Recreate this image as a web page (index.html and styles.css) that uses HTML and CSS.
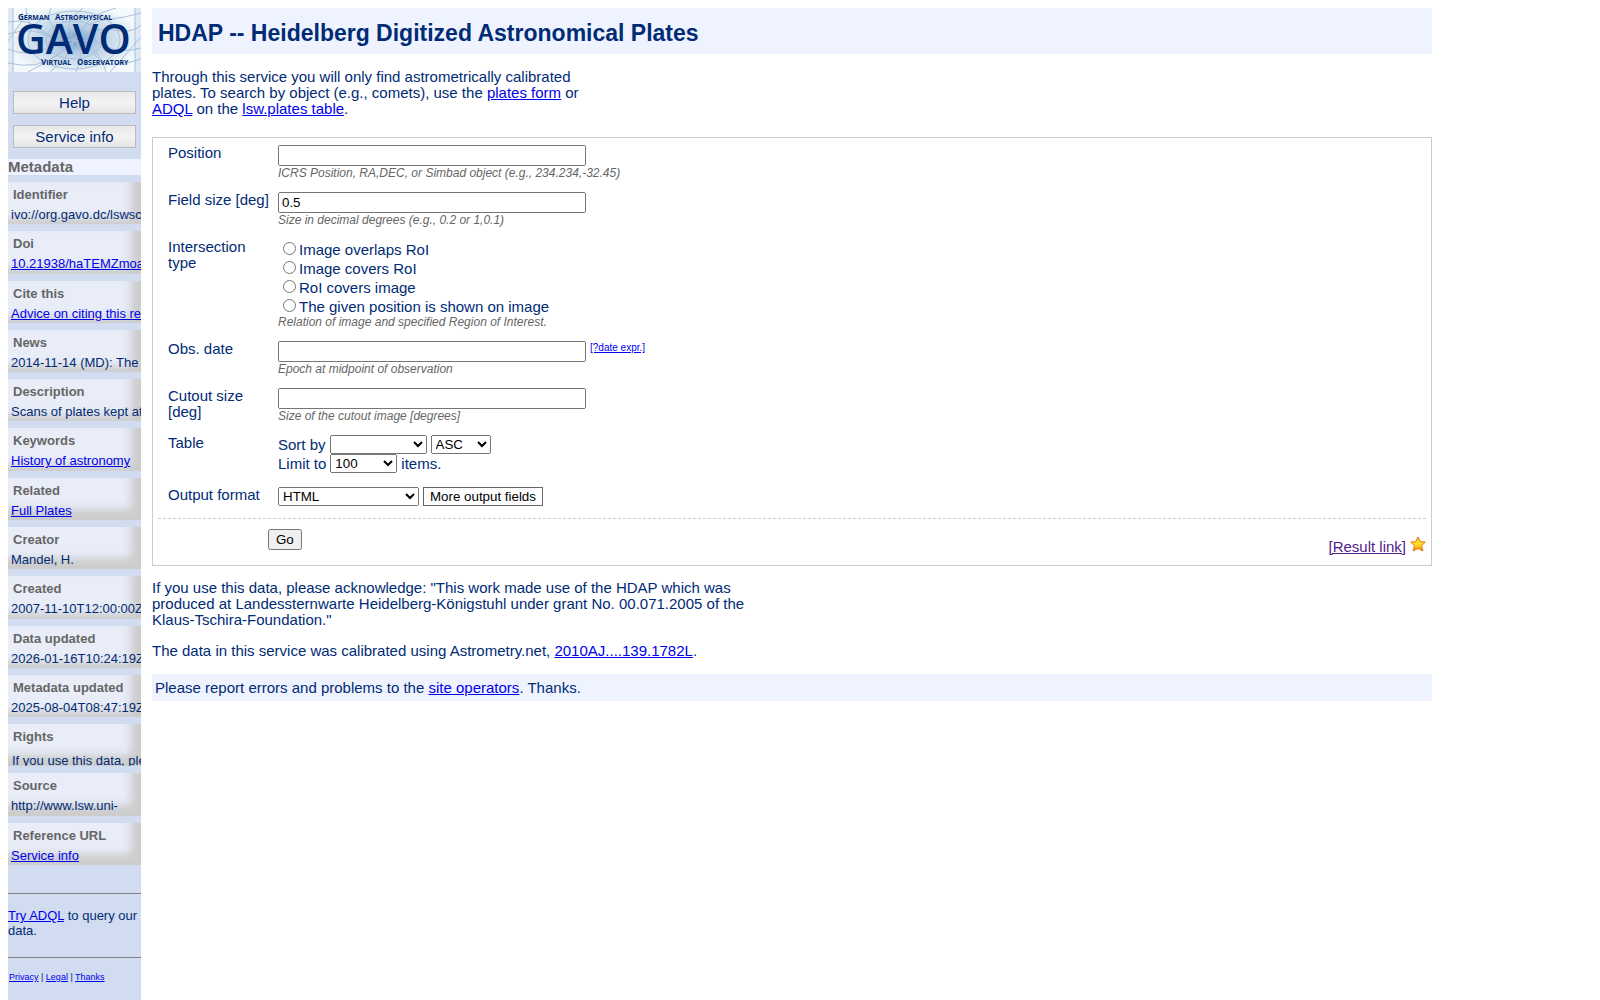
FILE: index.html
```html
<!DOCTYPE html>
<html lang="en">

<head>
  <meta charset="UTF-8">
  <meta name="viewport" content="width=device-width, initial-scale=1.0">
  <title>HDAP -- Heidelberg Digitized Astronomical Plates</title>
  <link rel="stylesheet" href="styles.css">
</head>

<body>
  <div class="sidebar">
    <a href="#" class="logo-link">
      <svg class="logo" viewBox="0 0 133 64" role="img" aria-label="GAVO">
        <defs>
          <radialGradient id="glow" cx="50%" cy="50%" r="55%">
            <stop offset="0" stop-color="#6d97c4" />
            <stop offset="0.35" stop-color="#b4cde3" />
            <stop offset="1" stop-color="#f4f9fb" />
          </radialGradient>
        </defs>
        <rect width="133" height="64" fill="#dfe9f5" />
        <rect x="5" width="122" height="64" fill="url(#glow)" />
        <g fill="none" stroke="#a9bfdc" stroke-width="1">
          <path d="M5 0V64M127 0V64M0 14Q20 10 34 22T66 32Q80 38 90 50T133 51" />
          <path d="M0 26Q26 18 44 30T66 33Q84 30 98 38T133 40" />
          <path d="M0 41Q22 50 40 40T66 32Q88 18 106 22T133 17" />
          <path d="M0 55Q30 62 48 48T66 32Q76 14 96 12T133 5" />
          <path d="M18 0Q16 18 38 26T66 32Q90 36 98 64" />
          <path d="M43 0Q36 16 52 24T66 32Q78 42 68 64" />
          <path d="M75 0Q56 14 62 24T66 32Q64 46 42 64" />
          <path d="M108 0Q84 6 74 20T66 32Q52 48 20 64" />
          <ellipse cx="66" cy="32" rx="28" ry="19" />
          <ellipse cx="66" cy="32" rx="46" ry="29" />
          <path d="M0 33L20 5M102 64L133 29" />
        </g>
        <g class="logo-text">
          <text x="10" y="12" font-size="8">G<tspan font-size="7">ERMAN</tspan></text>
          <text x="47" y="12" font-size="8">A<tspan font-size="7">STROPHYSICAL</tspan></text>
          <text x="8" y="46" class="logo-name">GAVO</text>
          <text x="33" y="57" font-size="8">V<tspan font-size="7">IRTUAL</tspan></text>
          <text x="69" y="57" font-size="8">O<tspan font-size="7">BSERVATORY</tspan></text>
        </g>
      </svg>
    </a>

    <a href="#" class="side-button">Help</a>
    <a href="#" class="side-button">Service info</a>

    <h3>Metadata</h3>
    <div class="meta-list">
      <div class="meta-item"><h4>Identifier</h4><p>ivo://org.gavo.dc/lswscans/res/positions/siap</p></div>
      <div class="meta-item"><h4>Doi</h4><p><a href="#">10.21938/haTEMZmoaKbHJCL5JKcCZg</a></p></div>
      <div class="meta-item"><h4>Cite this</h4><p><a href="#">Advice on citing this resource</a></p></div>
      <div class="meta-item"><h4>News</h4><p>2014-11-14 (MD): The plates</p></div>
      <div class="meta-item"><h4>Description</h4><p>Scans of plates kept at Landessternwarte</p></div>
      <div class="meta-item"><h4>Keywords</h4><p><a href="#">History of astronomy</a></p></div>
      <div class="meta-item short"><h4>Related</h4><p><a href="#">Full Plates</a></p></div>
      <div class="meta-item short"><h4>Creator</h4><p>Mandel, H.</p></div>
      <div class="meta-item"><h4>Created</h4><p>2007-11-10T12:00:00Z</p></div>
      <div class="meta-item"><h4>Data updated</h4><p>2026-01-16T10:24:19Z</p></div>
      <div class="meta-item"><h4>Metadata updated</h4><p>2025-08-04T08:47:19Z</p></div>
      <div class="meta-item short rights"><h4>Rights</h4><p>If you use this data, please acknowledge</p></div>
      <div class="meta-item short"><h4>Source</h4><p>http://www.lsw.uni-</p></div>
      <div class="meta-item short"><h4>Reference URL</h4><p><a href="#">Service info</a></p></div>
    </div>

    <div class="side-note"><a href="#">Try ADQL</a> to query our data.</div>
    <div class="side-legal"><a href="#">Privacy</a> | <a href="#">Legal</a> | <a href="#">Thanks</a></div>
  </div>

  <div class="content">
    <h1>HDAP -- Heidelberg Digitized Astronomical Plates</h1>

    <p class="intro">Through this service you will only find astrometrically calibrated
      plates. To search by object (e.g., comets), use the <a href="#">plates form</a> or
      <a href="#">ADQL</a> on the <a href="#">lsw.plates table</a>.</p>

    <form class="query-form">
      <div class="row">
        <label class="name" for="pos">Position</label>
        <div class="field">
          <input type="text" id="pos">
          <div class="hint">ICRS Position, RA,DEC, or Simbad object (e.g., 234.234,-32.45)</div>
        </div>
      </div>
      <div class="row">
        <label class="name" for="size">Field size [deg]</label>
        <div class="field">
          <input type="text" id="size" value="0.5">
          <div class="hint">Size in decimal degrees (e.g., 0.2 or 1,0.1)</div>
        </div>
      </div>
      <div class="row" role="radiogroup" aria-labelledby="intersect">
        <div class="name" id="intersect">Intersection type</div>
        <div class="field">
          <div class="choices">
            <label><input type="radio" name="INTERSECT">Image overlaps RoI</label>
            <label><input type="radio" name="INTERSECT">Image covers RoI</label>
            <label><input type="radio" name="INTERSECT">RoI covers image</label>
            <label><input type="radio" name="INTERSECT">The given position is shown on image</label>
          </div>
          <div class="hint">Relation of image and specified Region of Interest.</div>
        </div>
      </div>
      <div class="row">
        <label class="name" for="date">Obs. date</label>
        <div class="field">
          <div class="with-help"><input type="text" id="date"><a href="#" class="help">[?date expr.]</a></div>
          <div class="hint">Epoch at midpoint of observation</div>
        </div>
      </div>
      <div class="row">
        <label class="name" for="cutout">Cutout size [deg]</label>
        <div class="field">
          <input type="text" id="cutout">
          <div class="hint">Size of the cutout image [degrees]</div>
        </div>
      </div>
      <div class="row table-row">
        <div class="name">Table</div>
        <div class="field">
          <div class="line">
            <label for="sort">Sort by</label>
            <select id="sort" class="w-sort"><option></option><option>accref</option></select>
            <select class="w-dir" aria-label="Sort direction"><option>ASC</option><option>DESC</option></select>
          </div>
          <div class="line">
            <label for="limit">Limit to</label>
            <select id="limit" class="w-limit"><option>100</option><option>1000</option></select>
            <span>items.</span>
          </div>
        </div>
      </div>
      <div class="row">
        <label class="name" for="format">Output format</label>
        <div class="field line">
          <select id="format" class="w-format"><option>HTML</option><option>VOTable</option></select>
          <button type="button" class="more">More output fields</button>
        </div>
      </div>

      <div class="actions">
        <button type="submit" class="go">Go</button>
        <div class="result">
          <a href="#" class="result-link">[Result link]</a>
          <svg class="star" viewBox="0 0 16 16" aria-hidden="true">
            <defs>
              <linearGradient id="gold" x1="0" y1="0" x2="0" y2="1">
                <stop offset="0" stop-color="#ffc83a" />
                <stop offset="0.5" stop-color="#ffe227" />
                <stop offset="1" stop-color="#f98a0b" />
              </linearGradient>
            </defs>
            <path d="M8 1L10.2 5.6L15.3 6.1L11.6 9.6L13 15L8 12.4L3 15L4.4 9.6L0.7 6.1L5.8 5.6Z" fill="url(#gold)" stroke="#de7a1c" stroke-linejoin="round" />
          </svg>
        </div>
      </div>
    </form>

    <p class="ack">If you use this data, please acknowledge: "This work made use of the HDAP which was
      produced at Landessternwarte Heidelberg-Königstuhl under grant No. 00.071.2005 of the
      Klaus-Tschira-Foundation."</p>
    <p class="ack">The data in this service was calibrated using Astrometry.net, <a href="#">2010AJ....139.1782L</a>.</p>

    <div class="footer">Please report errors and problems to the <a href="#">site operators</a>. Thanks.</div>
  </div>
</body>

</html>
```

FILE: styles.css
```css
* {
  box-sizing: border-box;
}

body {
  margin: 0;
  padding: 8px 0 0 8px;
  min-height: 100vh;
  display: flex;
  gap: 11px;
  background: white;
  color: #002b75;
  font-family: "Liberation Sans", Arial, sans-serif;
  font-size: 15px;
  line-height: 16px;
}

a {
  color: #0000ee;
}

/* sidebar */
.sidebar {
  width: 133px;
  flex: none;
  background: #d1dcf0;
  font-size: 13px;
}

.logo-link,
.logo {
  display: block;
}

.logo {
  width: 133px;
  height: 64px;
  margin-bottom: 19px;
}

.logo-text {
  fill: #002b75;
  font-family: "Open Sans", sans-serif;
  font-weight: bold;
}

.logo-name {
  font-size: 41px;
  font-weight: 600;
}

.side-button {
  display: block;
  margin: 0 5px 11px;
  border: 1px solid #bbb;
  background: linear-gradient(#e8e8e8, #f3f3f3 50%, #e4e4e4);
  color: #002b75;
  font-size: 15px;
  line-height: 21px;
  text-align: center;
  text-decoration: none;
}

.sidebar h3 {
  margin: 0 0 7px;
  background: #eff3ff;
  color: #666;
  font-size: 15px;
  line-height: 16px;
}

.meta-list {
  display: grid;
  grid-template-rows: repeat(14, 1fr);
  gap: 7px;
  min-height: 683px;
}

.meta-item {
  overflow: hidden;
  background: #e8edf8;
  box-shadow: inset -10px -6px 8px #ccc;
  white-space: nowrap;
}

.meta-item.short {
  box-shadow: inset -10px -11px 8px #ccc;
}

.meta-item h4 {
  margin: 0;
  padding: 5px 5px 0;
  color: #666;
  font-size: 13px;
  line-height: 15px;
}

.meta-item p {
  margin: 0;
  padding: 5px 3px 0;
  line-height: 15px;
}

.meta-item.rights {
  height: 42px;
}

.meta-item.rights p {
  padding: 9px 4px 0;
}

.side-note {
  margin-top: 28px;
  padding: 14px 0 19px;
  border-top: 1px solid #808080;
  border-bottom: 1px solid #808080;
  line-height: 15px;
}

.side-legal {
  padding: 14px 1px;
  font-size: 9px;
  line-height: 11px;
}

/* main column */
.content {
  width: 80vw;
}

h1 {
  margin: 0 0 15px;
  padding: 12px 6px 8px;
  background: #eff3ff;
  font-size: 23px;
  line-height: 26px;
}

.intro {
  max-width: 430px;
  margin: 0 0 20px;
}

.query-form {
  border: 1px solid #ccc;
  padding: 7px 5px 10px;
}

.row {
  display: flex;
  gap: 6px;
  padding: 0 10px;
  margin-bottom: 12px;
}

.name {
  width: 104px;
  flex: none;
}

#intersect,
.name[for="cutout"] {
  padding-right: 10px;
}

.field input[type="text"] {
  display: block;
  width: 308px;
  height: 21px;
}

.hint {
  color: #666;
  font-size: 12px;
  font-style: italic;
  line-height: 14px;
}

.choices {
  display: flex;
  flex-direction: column;
  padding-top: 1px;
}

.choices label {
  display: flex;
  align-items: center;
  line-height: 19px;
}

.choices input {
  margin: 0 3px 3px 5px;
}

.choices + .hint {
  line-height: 13px;
}

.with-help {
  display: flex;
  gap: 4px;
}

.help {
  font-size: 10px;
  line-height: 14px;
}

.line {
  display: flex;
  align-items: center;
  gap: 4px;
}

.table-row {
  gap: 6px;
  margin-bottom: 14px;
}

select {
  height: 19px;
}

.w-sort {
  width: 97px;
}

.w-dir {
  width: 60px;
}

.w-limit {
  width: 67px;
}

.w-format {
  width: 141px;
}

.more {
  height: 19px;
  border: 1px solid #666;
  background: white;
}

.actions {
  display: flex;
  justify-content: space-between;
  padding: 10px 0 0 110px;
  border-top: 1px dashed #ccc;
}

.go {
  height: 21px;
}

.result {
  display: flex;
  align-items: flex-start;
  gap: 4px;
  padding-top: 7px;
}

.result-link {
  padding-top: 3px;
  color: #551a8b;
}

.star {
  width: 16px;
  height: 16px;
}

.ack {
  max-width: 600px;
  margin: 14px 0 15px;
}

.footer {
  padding: 6px 3px 5px;
  background: #eff3ff;
}
```
